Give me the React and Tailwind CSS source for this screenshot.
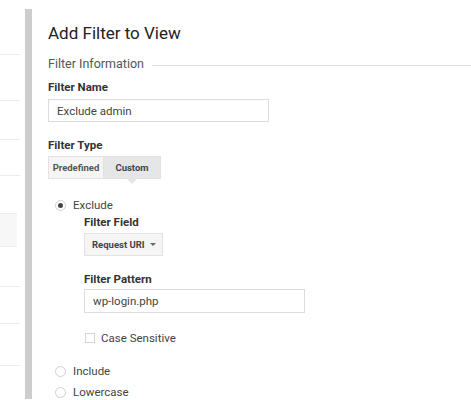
import { useState } from 'react'

function Radio({ checked }) {
  return (
    <span className="w-[11px] h-[11px] rounded-full border border-[#cfcfcf] bg-white flex items-center justify-center shrink-0">
      {checked && <span className="w-[5px] h-[5px] rounded-full bg-[#444]" />}
    </span>
  )
}

export default function App() {
  const [type, setType] = useState('custom')

  return (
    <div className="w-[471px] h-[400px] bg-white flex overflow-hidden font-['Roboto','Liberation_Sans',sans-serif] text-[#333]">
      {/* background list behind the panel */}
      <div className="w-[20px] shrink-0 flex flex-col">
        <div className="h-[55px] border-b border-[#ececec]" />
        <div className="h-[46px] border-b border-[#ececec]" />
        <div className="h-[39px] border-b border-[#ececec]" />
        <div className="h-[36px] border-b border-[#ececec]" />
        <div className="h-[37px]" />
        <div className="h-[34px] bg-[#f7f7f7] border-y border-[#ececec] mr-[3px]" />
        <div className="h-[40px] border-b border-[#ececec]" />
        <div className="h-[37px] border-b border-[#ececec]" />
        <div className="h-[42px] border-b border-[#ececec]" />
      </div>

      <div className="w-[5px] shrink-0" />
      <div className="w-[7px] shrink-0 mt-[9px] h-[390px] bg-[#cdcdcd]" />

      <div className="flex-1 pl-4 pt-[22px]">
        <h1 className="text-[17px] leading-[22px] text-[#222]">Add Filter to View</h1>

        <div className="flex items-center mt-[12px]">
          <span className="text-[12.5px] text-[#555] leading-4">Filter Information</span>
          <span className="flex-1 h-px bg-[#e0e0e0] ml-2 mt-[3px]" />
        </div>

        <div className="text-[11.5px] font-bold text-[#333] mt-[7px] leading-4">Filter Name</div>
        <div className="mt-[4px] w-[221px] h-[23px] border border-[#dcdcdc] flex items-center px-2 text-[11.5px] leading-4 text-[#444]">
          Exclude admin
        </div>

        <div className="text-[11.5px] font-bold text-[#333] mt-[15px] leading-4">Filter Type</div>
        <div className="mt-[3px] flex">
          <button
            onClick={() => setType('predefined')}
            className={`w-[56px] h-[23px] text-[9.5px] leading-3 font-bold text-[#555] border border-[#e2e2e2] ${type === 'predefined' ? 'bg-[#e6e6e6]' : 'bg-[#f5f5f5]'}`}
          >
            Predefined
          </button>
          <button
            onClick={() => setType('custom')}
            className={`relative w-[57px] h-[23px] text-[9.5px] leading-3 font-bold text-[#444] border border-l-0 border-[#e2e2e2] ${type === 'custom' ? 'bg-[#e6e6e6]' : 'bg-[#f5f5f5]'}`}
          >
            Custom
            {type === 'custom' && (
              <span className="absolute left-1/2 -bottom-[6px] -translate-x-1/2 w-0 h-0 border-l-[6px] border-r-[6px] border-t-[6px] border-l-transparent border-r-transparent border-t-[#e6e6e6]" />
            )}
          </button>
        </div>

        <div className="mt-[18px] pl-[7px] flex items-center gap-[7px]">
          <Radio checked />
          <span className="text-[11.5px] leading-4 text-[#444]">Exclude</span>
        </div>

        <div className="pl-[36px]">
          <div className="text-[11.5px] font-bold text-[#333] mt-px leading-4">Filter Field</div>
          <div className="mt-[3px] w-[79px] h-[23px] border border-[#e2e2e2] bg-[#f5f5f5] flex items-center justify-between pl-[7px] pr-[6px]">
            <span className="text-[9.5px] leading-3 font-bold text-[#444]">Request URI</span>
            <span className="w-0 h-0 border-l-[3px] border-r-[3px] border-t-[3px] border-l-transparent border-r-transparent border-t-[#666]" />
          </div>

          <div className="text-[11.5px] font-bold text-[#333] mt-[15px] leading-4">Filter Pattern</div>
          <div className="mt-[2px] w-[221px] h-[24px] border border-[#dcdcdc] flex items-center px-2 text-[11.5px] leading-4 text-[#444]">
            wp-login.php
          </div>

          <div className="mt-[17px] flex items-center gap-[6px] pl-px">
            <span className="w-[10px] h-[10px] border border-[#d5d5d5] bg-white" />
            <span className="text-[11.5px] leading-4 text-[#444]">Case Sensitive</span>
          </div>
        </div>

        <div className="mt-[17px] pl-[7px] flex items-center gap-[7px]">
          <Radio />
          <span className="text-[11.5px] leading-4 text-[#444]">Include</span>
        </div>
        <div className="mt-[5px] pl-[7px] flex items-center gap-[7px]">
          <Radio />
          <span className="text-[11.5px] leading-4 text-[#444]">Lowercase</span>
        </div>
      </div>
    </div>
  )
}
